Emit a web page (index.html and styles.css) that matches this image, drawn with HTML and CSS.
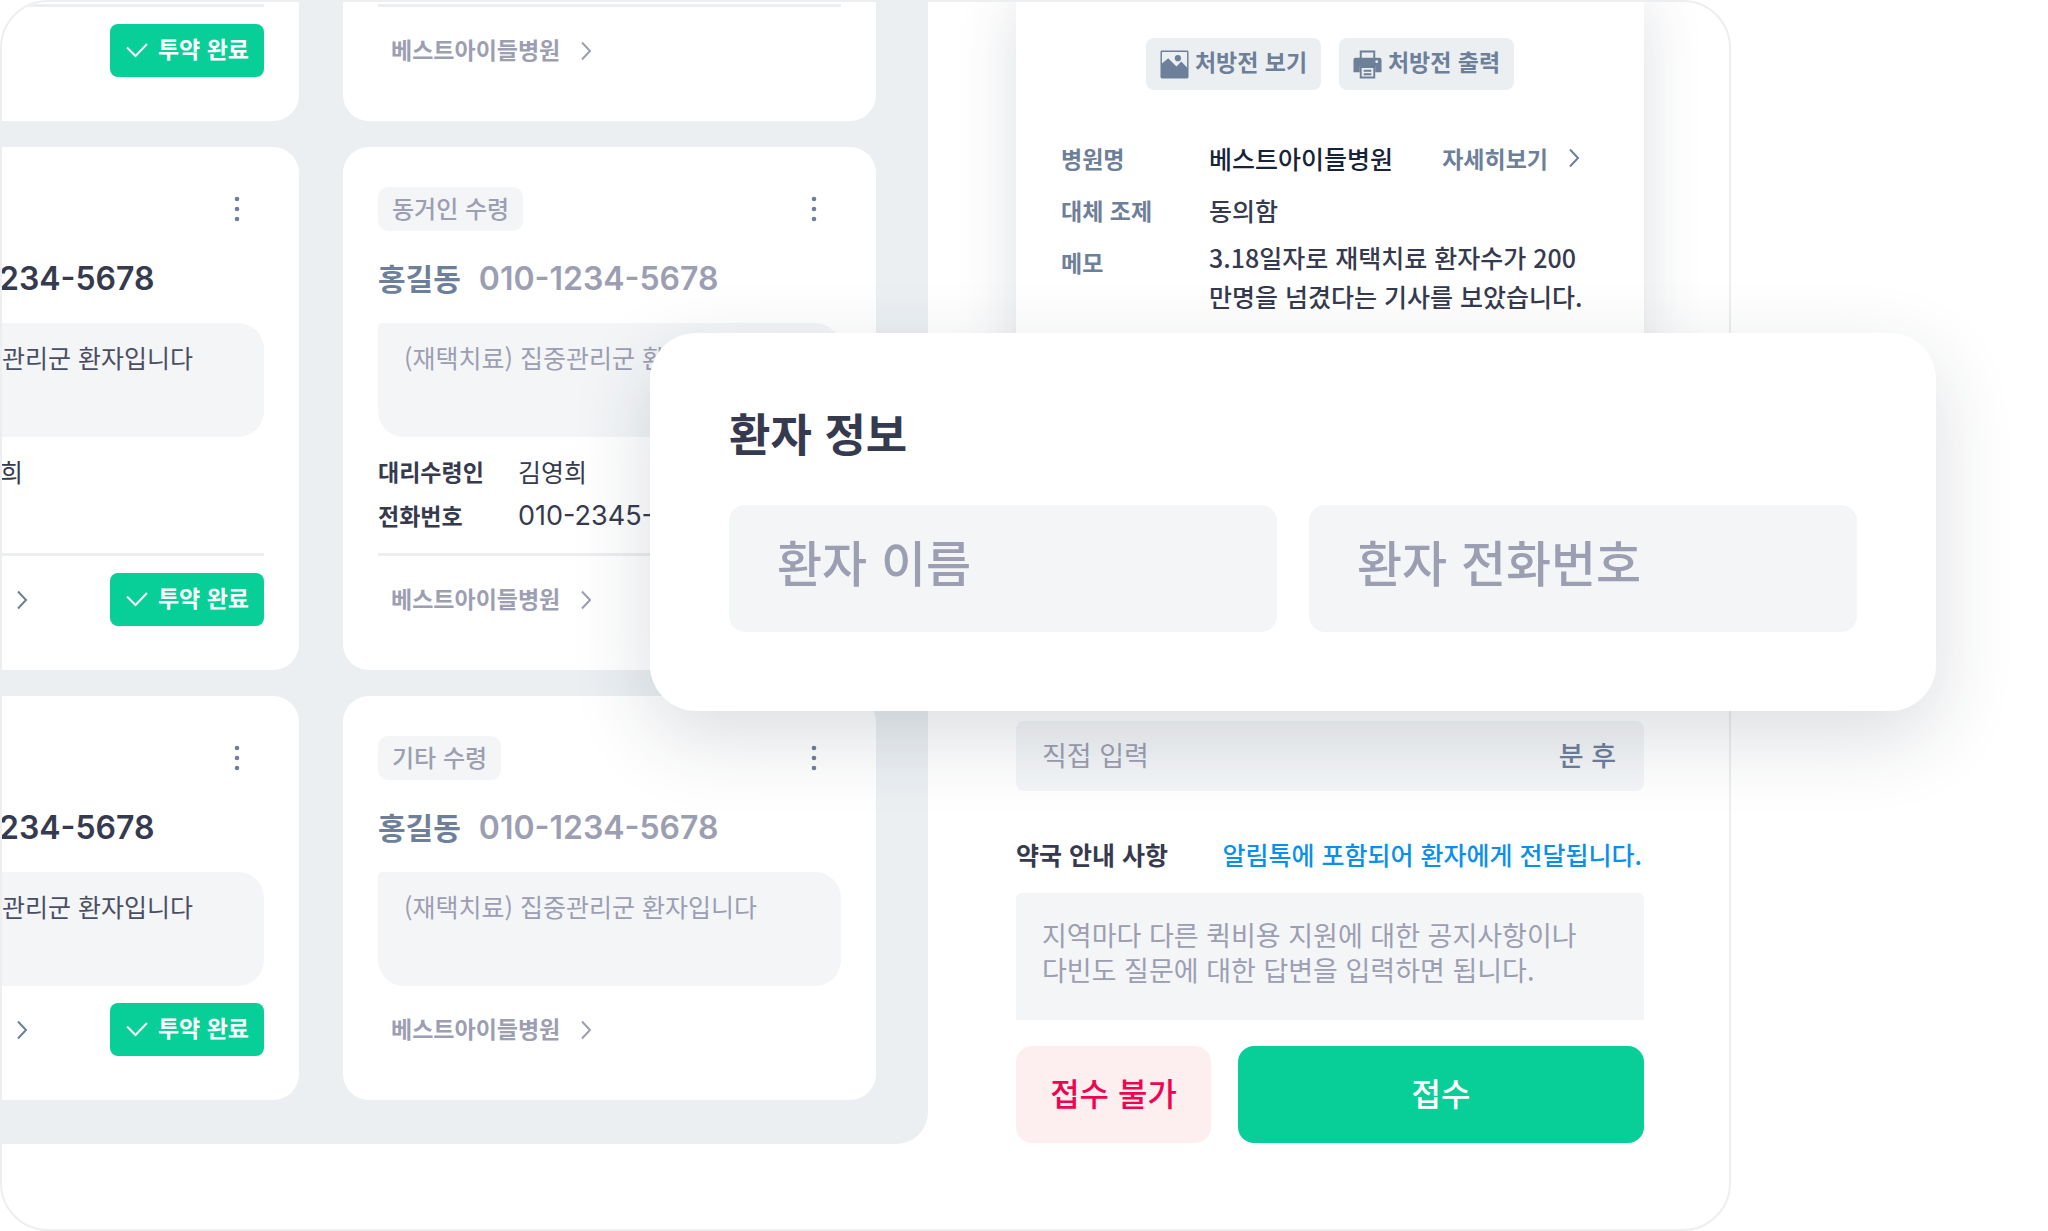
FILE: index.html
```html
<!DOCTYPE html>
<html lang="ko">
<head>
<meta charset="utf-8">
<meta name="viewport" content="width=device-width, initial-scale=1">
<title>처방 접수</title>
<link rel="stylesheet" href="styles.css">
</head>
<body>
<svg class="symbols" aria-hidden="true">
  <symbol id="chevron" viewBox="0 0 12 20"><path d="M2 1.500 10 10 2 18.500" fill="none" stroke="currentColor" stroke-width="2"/></symbol>
  <symbol id="check" viewBox="0 0 24 16"><path d="M2 5.500 10.500 14 22 2" fill="none" stroke="currentColor" stroke-width="2"/></symbol>
  <symbol id="kebab" viewBox="0 0 6 26"><circle cx="3" cy="3" r="2.300"/><circle cx="3" cy="13" r="2.300"/><circle cx="3" cy="23" r="2.300"/></symbol>
  <symbol id="picture" viewBox="0 0 30 30"><path fill-rule="evenodd" d="M2 0.500H28Q29.500 .5 29.500 2V28Q29.500 29.500 28 29.500H2Q.5 29.500 .5 28V2Q.5 .5 2 .5ZM2 2V14L8.500 8.500 17 17 22 12 28 18V2Z"/><circle cx="18.500" cy="8.500" r="3.200"/></symbol>
  <symbol id="printer" viewBox="0 0 30 30"><path d="M8 9V1.500H22V9" fill="none" stroke="currentColor" stroke-width="2"/><path fill-rule="evenodd" d="M2.500 8H27.500Q29.500 8 29.500 10.500V23H23V17H7V23H.5V10.500Q.5 8 2.500 8ZM24.500 10.500a1.500 1.500 0 1 0 .01 0Z"/><path d="M8 17.500H22V28.500H8Z" fill="none" stroke="currentColor" stroke-width="2"/><path d="M11 21.500H19M11 25H19" stroke="currentColor" stroke-width="2"/></symbol>
</svg>

<div class="stage">
  <main class="frame">
    <section class="board" aria-label="처방 목록">
      <div class="column column--done">
        <article class="card card--rest">
          <hr class="rule">
          <div class="foot foot--end">
            <button class="done" type="button"><svg class="check"><use href="#check"/></svg>투약 완료</button>
          </div>
        </article>
        <article class="card">
          <div class="head head--end">
            <button class="kebab" type="button" aria-label="더보기"><svg><use href="#kebab"/></svg></button>
          </div>
          <h3 class="patient">홍길동 <span class="phone">010-1234-5678</span></h3>
          <p class="memo">(재택치료) 집중관리군 환자입니다</p>
          <dl class="proxy">
            <dt>대리수령인</dt><dd>김영희</dd>
            <dt>전화번호</dt><dd class="number"></dd>
          </dl>
          <hr class="rule">
          <div class="foot">
            <a class="hospital" href="#">베스트아이들병원<svg class="chevron"><use href="#chevron"/></svg></a>
            <button class="done" type="button"><svg class="check"><use href="#check"/></svg>투약 완료</button>
          </div>
        </article>
        <article class="card">
          <div class="head head--end">
            <button class="kebab" type="button" aria-label="더보기"><svg><use href="#kebab"/></svg></button>
          </div>
          <h3 class="patient">홍길동 <span class="phone">010-1234-5678</span></h3>
          <p class="memo">(재택치료) 집중관리군 환자입니다</p>
          <div class="foot">
            <a class="hospital" href="#">베스트아이들병원<svg class="chevron"><use href="#chevron"/></svg></a>
            <button class="done" type="button"><svg class="check"><use href="#check"/></svg>투약 완료</button>
          </div>
        </article>
      </div>

      <div class="column column--past">
        <article class="card card--rest">
          <hr class="rule">
          <div class="foot">
            <a class="hospital" href="#">베스트아이들병원<svg class="chevron"><use href="#chevron"/></svg></a>
          </div>
        </article>
        <article class="card">
          <div class="head">
            <span class="tag">동거인 수령</span>
            <button class="kebab" type="button" aria-label="더보기"><svg><use href="#kebab"/></svg></button>
          </div>
          <h3 class="patient">홍길동 <span class="phone">010-1234-5678</span></h3>
          <p class="memo">(재택치료) 집중관리군 환자입니다</p>
          <dl class="proxy">
            <dt>대리수령인</dt><dd>김영희</dd>
            <dt>전화번호</dt><dd class="number">010-2345-6789</dd>
          </dl>
          <hr class="rule">
          <div class="foot">
            <a class="hospital" href="#">베스트아이들병원<svg class="chevron"><use href="#chevron"/></svg></a>
          </div>
        </article>
        <article class="card">
          <div class="head">
            <span class="tag">기타 수령</span>
            <button class="kebab" type="button" aria-label="더보기"><svg><use href="#kebab"/></svg></button>
          </div>
          <h3 class="patient">홍길동 <span class="phone">010-1234-5678</span></h3>
          <p class="memo">(재택치료) 집중관리군 환자입니다</p>
          <div class="foot">
            <a class="hospital" href="#">베스트아이들병원<svg class="chevron"><use href="#chevron"/></svg></a>
          </div>
        </article>
      </div>
    </section>

    <section class="side" aria-label="처방 상세">
      <div class="sheet">
        <div class="tools">
          <button class="tool" type="button"><svg><use href="#picture"/></svg><span>처방전 보기</span></button>
          <button class="tool" type="button"><svg><use href="#printer"/></svg><span>처방전 출력</span></button>
        </div>
        <dl class="detail">
          <dt>병원명</dt>
          <dd class="detail-hospital">베스트아이들병원<a class="more" href="#">자세히보기<svg class="chevron"><use href="#chevron"/></svg></a></dd>
          <dt>대체 조제</dt>
          <dd>동의함</dd>
          <dt>메모</dt>
          <dd class="detail-memo">3.18일자로 재택치료 환자수가 200<br>만명을 넘겼다는 기사를 보았습니다.</dd>
        </dl>
      </div>

      <form class="reply">
        <div class="minutes">
          <input id="minutes" type="text" placeholder="직접 입력">
          <label for="minutes">분 후</label>
        </div>
        <div class="notice-head">
          <label class="notice-label" for="notice">약국 안내 사항</label>
          <span class="notice-hint">알림톡에 포함되어 환자에게 전달됩니다.</span>
        </div>
        <textarea class="notice" id="notice" placeholder="지역마다 다른 퀵비용 지원에 대한 공지사항이나
다빈도 질문에 대한 답변을 입력하면 됩니다."></textarea>
        <div class="actions">
          <button class="reject" type="button">접수 불가</button>
          <button class="accept" type="button">접수</button>
        </div>
      </form>
    </section>
  </main>

  <section class="popup" aria-labelledby="popup-title">
    <h2 class="popup-title" id="popup-title">환자 정보</h2>
    <div class="popup-fields">
      <input type="text" placeholder="환자 이름" aria-label="환자 이름">
      <input type="text" placeholder="환자 전화번호" aria-label="환자 전화번호">
    </div>
  </section>
</div>
</body>
</html>
```

FILE: styles.css
```css
:root {
  --ink: #363a4e;
  --muted: #9c9eb2;
  --slate: #6e7f99;
  --green: #08cf98;
  --field: #f3f5f7;
  --board: #ebeff2;
  --line: #eceef0;
}

* {
  box-sizing: border-box;
}

body {
  margin: 0;
  background: #fff;
  color: var(--ink);
  font-family: "Noto Sans CJK KR", sans-serif;
  font-size: 25px;
}

h2, h3, p, dl, dd {
  margin: 0;
}

button, input, textarea {
  border: 0;
  font: inherit;
}

input::placeholder,
textarea::placeholder {
  color: var(--muted);
  opacity: 1;
}

a {
  color: inherit;
  text-decoration: none;
}

svg {
  flex: none;
  fill: currentColor;
}

.symbols {
  display: none;
}

.stage {
  position: relative;
  overflow: hidden;
  padding-right: 317px;
}

.frame {
  display: flex;
  align-items: flex-start;
  padding-bottom: 85px;
  overflow: hidden;
  border: 2px solid var(--line);
  border-radius: 48px;
}

/* Card board */
.board {
  display: flex;
  flex: none;
  justify-content: flex-end;
  gap: 44px;
  width: 926px;
  padding: 0 52px 44px 0;
  overflow: hidden;
  border-bottom-right-radius: 32px;
  background: var(--board);
}

.column {
  display: flex;
  flex: none;
  flex-direction: column;
  gap: 26px;
}

.column--done {
  width: 520px;
}

.column--past {
  width: 533px;
  color: var(--muted);
}

.card {
  padding: 40px 35px 44px;
  border-radius: 26px;
  background: #fff;
}

.card--rest {
  padding-top: 2px;
  border-radius: 0 0 26px 26px;
}

.head,
.foot {
  display: flex;
  align-items: center;
  justify-content: space-between;
}

.head {
  height: 44px;
}

.foot {
  height: 53px;
  margin-top: 17px;
}

.head--end,
.foot--end {
  justify-content: flex-end;
}

.tag {
  height: 44px;
  padding: 0 14px;
  border-radius: 10px;
  background: var(--field);
  color: var(--muted);
  font-size: 24px;
  font-weight: 500;
  line-height: 42px;
}

.kebab {
  display: flex;
  padding: 0 24px;
  background: none;
  color: var(--slate);
}

.kebab svg {
  width: 6px;
  height: 26px;
}

.patient {
  display: flex;
  align-items: center;
  gap: 18px;
  height: 92px;
  font-size: 30px;
  font-weight: 700;
}

.column--past .patient {
  color: var(--slate);
}

.phone {
  padding-top: 2px;
  font-family: Inter, sans-serif;
  font-size: 32px;
  font-weight: 600;
}

.column--past .phone {
  color: var(--muted);
}

.memo {
  height: 114px;
  padding: 16px 26px;
  border-radius: 4px 26px 26px 26px;
  background: var(--field);
  line-height: 36px;
  white-space: nowrap;
}

.column--done .memo {
  color: #4b4e63;
}

.proxy {
  display: grid;
  grid-template-columns: 140px 1fr;
  margin: 12px 0 16px;
  color: var(--ink);
  line-height: 44px;
}

.proxy dt {
  font-size: 23px;
  font-weight: 700;
}

.proxy .number {
  padding-top: 2px;
  font-family: Inter, sans-serif;
  font-size: 27px;
  line-height: 42px;
}

.rule {
  height: 3px;
  margin: 0;
  border: 0;
  background: var(--line);
}

.hospital {
  display: flex;
  align-items: center;
  gap: 20px;
  padding: 0 0 3px 13px;
  color: var(--slate);
  font-size: 23px;
  font-weight: 700;
}

.hospital .chevron {
  margin-top: 4px;
}

.column--past .hospital {
  color: var(--muted);
}

.chevron {
  width: 12px;
  height: 20px;
}

.done {
  display: flex;
  align-items: center;
  justify-content: center;
  gap: 9px;
  width: 154px;
  height: 53px;
  padding: 0 0 6px;
  border-radius: 8px;
  background: var(--green);
  color: #fff;
  font-size: 23px;
  font-weight: 700;
}

.check {
  width: 24px;
  height: 16px;
  margin-top: 4px;
}

/* Prescription side panel */
.side {
  flex: 1;
  min-width: 0;
  padding: 0 85px 0 88px;
}

.sheet {
  margin-bottom: 165px;
  padding: 36px 45px 240px;
  background: #fff;
  box-shadow: 0 0 56px rgba(50, 60, 85, 0.16);
}

.tools {
  display: flex;
  justify-content: center;
  gap: 18px;
  margin-bottom: 42px;
}

.tool {
  display: flex;
  align-items: center;
  justify-content: center;
  gap: 6px;
  width: 175px;
  height: 52px;
  padding: 0;
  border-radius: 8px;
  background: var(--board);
  color: var(--slate);
  font-size: 23px;
  font-weight: 700;
}

.tool span {
  padding-bottom: 6px;
}

.tool svg {
  width: 29px;
  height: 29px;
}

.detail {
  display: grid;
  grid-template-columns: 148px 1fr;
  line-height: 52px;
}

.detail dt {
  color: var(--slate);
  font-size: 23px;
  font-weight: 700;
}

.detail dd {
  font-weight: 500;
  white-space: nowrap;
}

.detail .detail-hospital {
  display: flex;
  justify-content: space-between;
  padding-right: 19px;
  color: #17233a;
}

.detail .detail-memo {
  padding-top: 2px;
  line-height: 39px;
}

.more {
  display: flex;
  align-items: center;
  gap: 20px;
  color: var(--slate);
  font-size: 23px;
  font-weight: 700;
}

.minutes {
  display: flex;
  align-items: center;
  height: 70px;
  padding: 0 28px 4px 26px;
  border-radius: 8px;
  background: var(--field);
  font-size: 27px;
}

.minutes input {
  flex: 1;
  min-width: 0;
  padding: 0;
  background: none;
}

.minutes label {
  color: var(--slate);
  font-weight: 500;
}

.notice-head {
  display: flex;
  align-items: center;
  justify-content: space-between;
  height: 102px;
  padding: 23px 2px 0 0;
}

.notice-label {
  font-weight: 700;
}

.notice-hint {
  color: #0a8fee;
  font-weight: 500;
}

.notice {
  display: block;
  width: 100%;
  height: 127px;
  padding: 24px 26px;
  border-radius: 6px 6px 0 0;
  background: var(--field);
  font-size: 27px;
  line-height: 35px;
  resize: none;
}

.actions {
  display: flex;
  gap: 27px;
  margin-top: 26px;
}

.actions button {
  height: 97px;
  padding: 0 0 6px;
  border-radius: 16px;
  font-size: 32px;
  font-weight: 500;
}

.reject {
  width: 195px;
  background: #fdeff0;
  color: #ee0550;
}

.accept {
  flex: 1;
  background: var(--green);
  color: #fff;
}

/* Patient popup floating over the frame */
.popup {
  position: absolute;
  top: 333px;
  right: 112px;
  left: 650px;
  padding: 62px 79px 79px;
  border-radius: 46px;
  background: #fff;
  box-shadow: 0 26px 80px rgba(32, 42, 60, 0.16);
}

.popup-title {
  font-size: 45px;
  font-weight: 700;
  line-height: 76px;
}

.popup-fields {
  display: grid;
  grid-template-columns: 1fr 1fr;
  gap: 32px;
  margin-top: 34px;
}

.popup-fields input {
  min-width: 0;
  height: 127px;
  padding: 0 48px 16px;
  border-radius: 16px;
  background: var(--field);
  font-size: 49px;
  font-weight: 500;
}
```
